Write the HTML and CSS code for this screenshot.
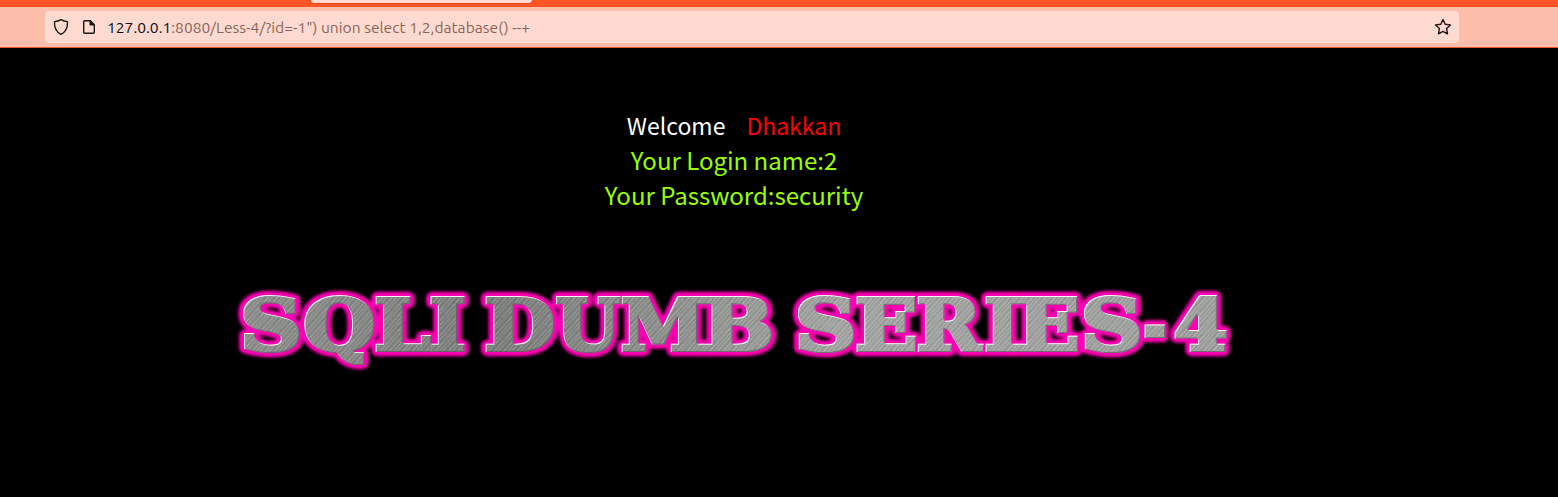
FILE: index.html
```
<!DOCTYPE html>
<html lang="en">
<head>
<meta charset="utf-8">
<title>Less-4</title>
<link rel="stylesheet" href="styles.css">
</head>
<body>
<header class="browser">
  <div class="tabstrip"><div class="tab"></div></div>
  <div class="toolbar">
    <div class="urlbar">
      <svg class="icon" width="16" height="18" viewBox="0 0 16 18"><path d="M8 1.6C6 2.9 3.800 3.500 1.500 3.600C1.200 9.400 3.300 14 8 16.300C12.700 14 14.800 9.400 14.500 3.600C12.200 3.500 10 2.900 8 1.600Z"/></svg>
      <svg class="icon page-icon" width="14" height="16" viewBox="0 0 14 16"><path d="M2.700 1.700H8.300L12.300 5.700V13.300Q12.300 14.300 11.300 14.300H2.700Q1.700 14.300 1.700 13.300V2.700Q1.700 1.700 2.700 1.700Z"/><path class="fold" d="M8 1.700V6H12.300Z"/></svg>
      <div class="url"><span class="host">127.0.0.1</span>:8080/Less-4/?id=-1") union select 1,2,database() --+</div>
      <svg class="icon star" width="18" height="18" viewBox="0 0 18 18"><path d="M9 1.500L11.200 6.200L16.400 6.900L12.600 10.500L13.500 15.800L9 13.300L4.500 15.800L5.400 10.500L1.600 6.900L6.800 6.200Z"/></svg>
    </div>
  </div>
</header>
<main class="page">
  <div class="messages">
    <div class="line greeting"><span class="welcome">Welcome</span><span class="name">Dhakkan</span></div>
    <div class="line login">Your Login name:2</div>
    <div class="line password">Your Password:security</div>
  </div>
  <svg class="banner" width="1010" height="100" viewBox="230 280 1010 100">
    <defs>
      <linearGradient id="steel" gradientUnits="userSpaceOnUse" x1="240" y1="0" x2="1230" y2="0">
        <stop offset="0" stop-color="#8d8f8d"/><stop offset=".1" stop-color="#888a88"/><stop offset=".25" stop-color="#7b7d7b"/><stop offset=".42" stop-color="#8d908d"/><stop offset=".6" stop-color="#a4a6a4"/><stop offset="1" stop-color="#a0a2a0"/>
      </linearGradient>
      <pattern id="brush" width="17" height="160" patternUnits="userSpaceOnUse" patternTransform="rotate(42)">
        <path class="bright" d="M.5 0V160M3 0V160M7.500 0V160M10 0V160M14.500 0V160"/>
        <path class="dark" d="M1.800 0V160M5 0V160M8.800 0V160M12 0V160M16 0V160"/>
      </pattern>
      <filter id="soft" x="-3%" y="-30%" width="106%" height="160%"><feGaussianBlur stdDeviation="1.5"/></filter>
      <filter id="bevel" x="-3%" y="-30%" width="106%" height="160%" color-interpolation-filters="sRGB">
        <feOffset in="SourceAlpha" dx="1" dy="1" result="a"/>
        <feFlood flood-color="#fff" flood-opacity=".9"/><feComposite operator="in" in2="SourceAlpha"/><feComposite operator="out" in2="a" result="light"/>
        <feOffset in="SourceAlpha" dx="-1" dy="-1" result="b"/>
        <feFlood flood-color="#555" flood-opacity=".65"/><feComposite operator="in" in2="SourceAlpha"/><feComposite operator="out" in2="b" result="shade"/>
        <feMerge><feMergeNode in="SourceGraphic"/><feMergeNode in="shade"/><feMergeNode in="light"/></feMerge>
      </filter>
      <text id="title" y="350"><tspan x="240" textLength="62" lengthAdjust="spacingAndGlyphs">S</tspan><tspan x="303.2" textLength="72.2" lengthAdjust="spacingAndGlyphs">Q</tspan><tspan x="374.3" textLength="56" lengthAdjust="spacingAndGlyphs">L</tspan><tspan x="429.3" textLength="36.4" lengthAdjust="spacingAndGlyphs">I</tspan> <tspan x="484.2" textLength="71" lengthAdjust="spacingAndGlyphs">D</tspan><tspan x="555.8" textLength="64.3" lengthAdjust="spacingAndGlyphs">U</tspan><tspan x="620.7" textLength="84.6" lengthAdjust="spacingAndGlyphs">M</tspan><tspan x="702" textLength="71.8" lengthAdjust="spacingAndGlyphs">B</tspan> <tspan x="794.8" textLength="62" lengthAdjust="spacingAndGlyphs">S</tspan><tspan x="855.2" textLength="62.3" lengthAdjust="spacingAndGlyphs">E</tspan><tspan x="916.4" textLength="64.6" lengthAdjust="spacingAndGlyphs">R</tspan><tspan x="984.3" textLength="36.4" lengthAdjust="spacingAndGlyphs">I</tspan><tspan x="1017.2" textLength="62.3" lengthAdjust="spacingAndGlyphs">E</tspan><tspan x="1080.8" textLength="62" lengthAdjust="spacingAndGlyphs">S</tspan><tspan x="1143.2" textLength="23.2" lengthAdjust="spacingAndGlyphs">-</tspan><tspan x="1173.7" textLength="53.6" lengthAdjust="spacingAndGlyphs">4</tspan></text>
    </defs>
    <use class="glow" href="#title"/>
    <g filter="url(#bevel)"><use class="metal" href="#title"/><use class="brushed" href="#title"/></g>
  </svg>
</main>
</body>
</html>
```
FILE: styles.css
```
body { margin: 0; background: #000; height: 497px; overflow: hidden; }
.browser { font-family: Ubuntu, "Noto Sans", sans-serif; }
.tabstrip { height: 7px; background: #fc5424; padding-left: 311px; }
.tab { width: 221px; height: 3px; background: #fedad0; border-radius: 0 0 4px 4px; box-shadow: 0 0 2px #a33a18; }
.toolbar { box-sizing: border-box; height: 41px; padding: 4px 99px 4px 45px; background: #fcbdab; border-bottom: 1px solid #e8562c; }
.urlbar { display: flex; align-items: center; box-sizing: border-box; height: 32px; padding: 0 7px 0 8px; background: #ffdad0; border-radius: 4px; }
.icon { flex: none; fill: none; stroke: #1c1512; stroke-width: 1.4; stroke-linejoin: round; }
.page-icon { margin-left: 13px; }
.fold { fill: #1c1512; stroke-width: 1; }
.url { flex: 1; margin-left: 11px; padding-bottom: 1px; font-size: 15.6px; line-height: 32px; color: #8b655b; white-space: pre; }
.host { color: #0c0807; }
.page { display: flex; flex-direction: column; width: 1468px; }
.messages { padding-top: 59px; text-align: center; font: 24px/35px "Noto Sans CJK SC", sans-serif; color: #99ff00; }
.line { height: 35px; }
.greeting { font-size: 23px; line-height: 37px; }
.welcome { color: #fff; margin-right: 21px; }
.name { color: #f00; }
.banner { display: block; margin: 68px 0 0 230px; font: bold 71.3px "DejaVu Serif", serif; }
.glow { fill: #ff00b4; stroke: #ff00b4; stroke-width: 12.5px; stroke-linejoin: round; filter: url(#soft); }
.metal { fill: url(#steel); stroke: url(#steel); stroke-width: 4.2px; }
.brushed { fill: url(#brush); stroke: url(#brush); stroke-width: 4.2px; }
.bright { stroke: #fff; stroke-opacity: .15; stroke-width: .8; }
.dark { stroke: #222; stroke-opacity: .14; stroke-width: .8; }
```
